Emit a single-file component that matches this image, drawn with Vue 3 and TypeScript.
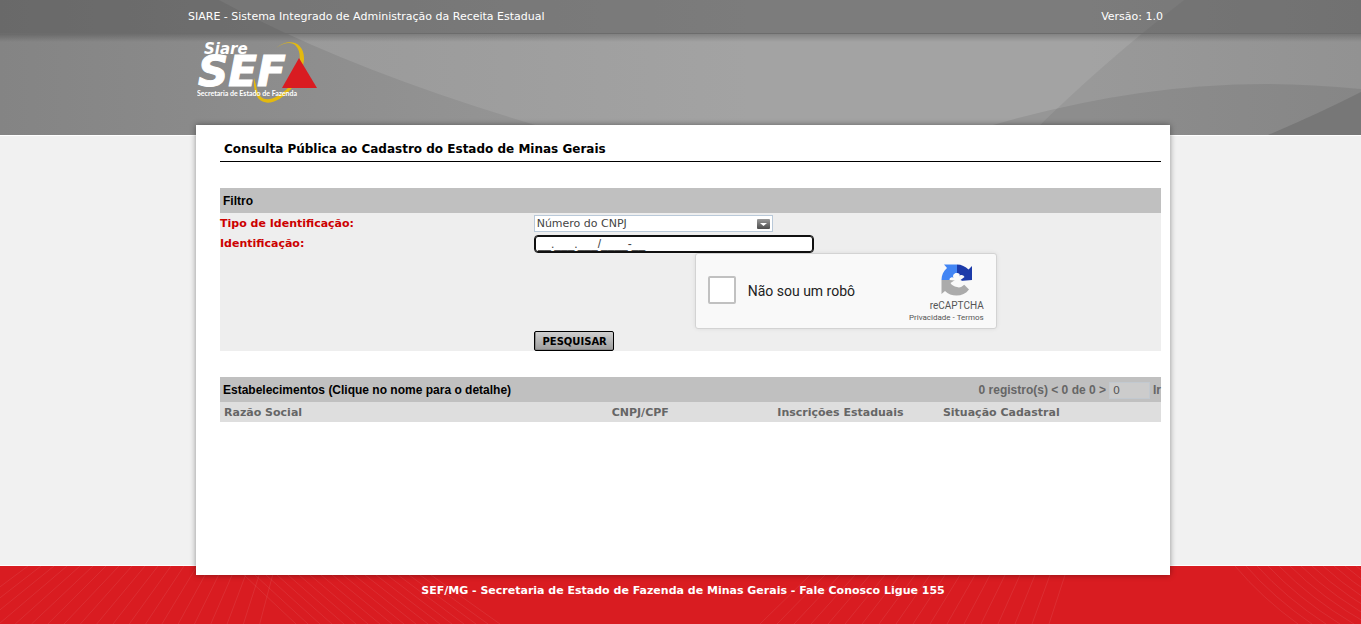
<script setup lang="ts">
import { ref } from 'vue'

const tipo = ref('cnpj')
const identificacao = ref('__.___.___/____-__')
const pagina = ref('0')
const robo = ref(false)

const tipos = [
  { value: 'cnpj', label: 'Número do CNPJ' },
  { value: 'cpf', label: 'Número do CPF' },
  { value: 'ie', label: 'Inscrição Estadual' },
]

const colunas = ['Razão Social', 'CNPJ/CPF', 'Inscrições Estaduais', 'Situação Cadastral']

const seq = (n: number): number[] => Array.from({ length: n }, (_, i) => i)
const leftRays = seq(20).map((i) => {
  const top = 28 + i * 13
  return `M${top} 0L${top - 78 + i * 3.3} 58`
})
const midRays = seq(18).map((i) => `M${244 + i * 11} 9L${296 + i * 12} 58`)
const rightRays = seq(18).map((i) => `M${760 + i * 17} 58L${810 + i * 15} 9`)
const edgeRays = seq(12).map((i) => `M${1235 + i * 11} 0Q${1262 + i * 12} 32 ${1298 + i * 14} 58`)
const rays = [...leftRays, ...midRays, ...rightRays, ...edgeRays].join('')
</script>

<template>
  <div class="page">
    <header class="header">
      <svg class="backdrop" viewBox="0 0 1361 135" preserveAspectRatio="none" aria-hidden="true">
        <defs>
          <linearGradient id="base" x1="0" x2="1" y1="0" y2="0">
            <stop offset="0" stop-color="#959595" />
            <stop offset="0.3" stop-color="#9c9c9c" />
            <stop offset="0.55" stop-color="#a3a3a3" />
            <stop offset="0.8" stop-color="#a3a3a3" />
            <stop offset="1" stop-color="#9c9c9c" />
          </linearGradient>
          <linearGradient id="left" x1="0" x2="1" y1="0" y2="0">
            <stop offset="0" stop-color="#848484" />
            <stop offset="1" stop-color="#969696" />
          </linearGradient>
          <linearGradient id="fade" x1="0" x2="0" y1="0" y2="1">
            <stop offset="0" stop-color="#000" stop-opacity="0.2" />
            <stop offset="1" stop-color="#000" stop-opacity="0" />
          </linearGradient>
        </defs>
        <rect width="1361" height="135" fill="url(#base)" />
        <path d="M0 0H219Q360 76 570 135H0Z" fill="url(#left)" />
        <path d="M1184 0H1361V135H1030Q1100 65 1184 0Z" fill="#000" fill-opacity="0.06" />
        <path d="M960 135Q1120 84 1265 84Q1310 84 1361 89V135Z" fill="#000" fill-opacity="0.08" />
        <path d="M1268 135Q1320 113 1361 92V135Z" fill="#777" />
        <rect width="1361" height="33" fill="#404040" fill-opacity="0.4" />
        <rect y="33" width="1361" height="1" fill="#6c6c6c" />
        <rect y="34" width="1361" height="8" fill="url(#fade)" />
      </svg>
      <div class="topbar">
        <div class="topbar-inner">
          <span>SIARE - Sistema Integrado de Administração da Receita Estadual</span>
          <span>Versão: 1.0</span>
        </div>
      </div>
      <div class="brand">
        <svg class="logo" width="122" height="66" viewBox="0 0 122 66" role="img" aria-label="Siare SEF">
          <path d="M79 10C92 -1 108 4 107 22C106 30 104 35 101 40L99 36C103 26 105 15 99 8C94 3 87 5 79 10Z" fill="#e3b90f" />
          <path d="M57 40C55 71 77 71 95 50L91 50C76 65 61 66 59 47Z" fill="#e3b90f" />
          <text x="7" y="16" class="logo-siare">Siare</text>
          <text x="1" y="48" class="logo-sef">SEF</text>
          <path d="M102 20L120 50H85Z" fill="#d91c21" />
          <text x="0" y="58" class="logo-tag">Secretaria de Estado de Fazenda</text>
        </svg>
      </div>
    </header>

    <div class="body">
      <main class="panel">
        <h1 class="title">Consulta Pública ao Cadastro do Estado de Minas Gerais</h1>

        <form class="filter" @submit.prevent>
          <h2 class="bar">Filtro</h2>
          <div class="row">
            <label for="tipo">Tipo de Identificação:</label>
            <div class="field">
              <div class="select">
                <select id="tipo" v-model="tipo">
                  <option v-for="t in tipos" :key="t.value" :value="t.value">{{ t.label }}</option>
                </select>
                <svg class="arrow" width="13" height="10" viewBox="0 0 13 10" aria-hidden="true">
                  <defs>
                    <linearGradient id="arrowFill" x1="0" x2="0" y1="0" y2="1">
                      <stop offset="0" stop-color="#999" />
                      <stop offset="1" stop-color="#4c4c4c" />
                    </linearGradient>
                  </defs>
                  <rect width="13" height="10" rx="1" fill="url(#arrowFill)" />
                  <path d="M3 4H10L6.5 7Z" fill="#fff" />
                </svg>
              </div>
            </div>
          </div>
          <div class="row">
            <label for="identificacao">Identificação:</label>
            <div class="field">
              <input id="identificacao" v-model="identificacao" class="ident" type="text" />
            </div>
          </div>
          <div class="captcha-row">
            <div class="captcha">
              <label class="check">
                <input v-model="robo" type="checkbox" />
                <span>Não sou um robô</span>
              </label>
              <div class="captcha-brand">
                <svg width="32" height="32" viewBox="0 0 64 64" aria-hidden="true">
                  <path d="M62 32V4L55 11C49 5 41 1 32 1V18L36 19C38 21 38 24 36 27L32 31L38 34Z" fill="#1c3aa9" />
                  <path d="M32 1H6L12 8C5 14 1 22 1 32H18C18 28 21 26 24 28L29 31L32 27Z" fill="#4285f4" />
                  <path d="M1 32V60L8 54C14 60 22 63 31 63C41 63 50 59 56 51L46 41C42 46 37 48 32 46C26 45 21 42 19 38L28 32Z" fill="#ababab" />
                  <path d="M17 32C17 27 21 26 25 28C22 22 27 17 32 18C35 20 36 22 35 26C38 20 45 21 47 26L39 32C43 33 46 37 48 41C42 45 36 43 33 38C30 39 28 37 28 33Z" fill="#f9f9f9" />
                </svg>
                <span class="captcha-name">reCAPTCHA</span>
                <span class="captcha-links"><a href="#">Privacidade</a> - <a href="#">Termos</a></span>
              </div>
            </div>
          </div>
          <div class="row">
            <span></span>
            <div class="field">
              <button type="submit" class="search">PESQUISAR</button>
            </div>
          </div>
        </form>

        <section>
          <div class="bar results-bar">
            <h2>Estabelecimentos (Clique no nome para o detalhe)</h2>
            <div class="pager">
              <span>0 registro(s) &lt; 0 de 0 &gt;</span>
              <input v-model="pagina" type="text" aria-label="Página" disabled />
              <span>Ir</span>
            </div>
          </div>
          <table class="results">
            <thead>
              <tr>
                <th v-for="c in colunas" :key="c" scope="col">{{ c }}</th>
              </tr>
            </thead>
          </table>
        </section>
      </main>
    </div>

    <footer class="footer">
      <svg class="backdrop" viewBox="0 0 1361 58" preserveAspectRatio="none" aria-hidden="true">
        <path :d="rays" fill="none" stroke="#fff" stroke-opacity="0.08" />
      </svg>
      <p>SEF/MG - Secretaria de Estado de Fazenda de Minas Gerais - Fale Conosco Ligue 155</p>
    </footer>
  </div>
</template>

<style>
body {
  margin: 0;
}
</style>

<style scoped>
.page {
  display: flex;
  flex-direction: column;
  min-height: 100vh;
  background: #f1f1f1;
  font-family: Verdana, "DejaVu Sans", sans-serif;
  font-size: 11px;
  line-height: 14px;
}
.page *,
.page {
  box-sizing: border-box;
}
h1,
h2,
p {
  margin: 0;
}
.header {
  position: relative;
  height: 135px;
  color: #fff;
}
.backdrop {
  position: absolute;
  top: 0;
  left: 0;
  width: 100%;
  height: 100%;
}
.topbar {
  position: relative;
  padding-right: 10px;
}
.topbar-inner {
  display: flex;
  justify-content: space-between;
  align-items: center;
  max-width: 975px;
  height: 33px;
  margin: 0 auto;
}
.brand {
  position: relative;
  max-width: 974px;
  margin: 0 auto;
  padding: 5px 0 0 3px;
}
.logo {
  display: block;
}
.logo text {
  fill: #fff;
}
.logo-siare {
  font: italic bold 15px "DejaVu Sans", sans-serif;
}
.logo-sef {
  font: italic bold 42px "DejaVu Sans", sans-serif;
  stroke: #fff;
  stroke-width: 1px;
}
.logo-tag {
  font: bold 7px Lato, sans-serif;
}
.body {
  display: flex;
  flex: 1;
  justify-content: center;
  padding-left: 5px;
  border-top: 1px solid #fff;
  border-bottom: 1px solid #fff;
}
.panel {
  position: relative;
  z-index: 1;
  width: 974px;
  margin: -11px 0 -10px;
  padding: 16px 9px 24px 24px;
  background: #fff;
  box-shadow: 0 0 6px rgba(0, 0, 0, 0.4);
}
.title {
  padding: 0 4px 3px;
  border-bottom: 1px solid #000;
  font-size: 12px;
  line-height: 17px;
}
.filter {
  margin: 26px 0;
  background: #eee;
}
.bar {
  height: 25px;
  padding: 1px 0 0 3px;
  background: #c0c0c0;
  font-family: "Liberation Sans", Arial, sans-serif;
  font-size: 12px;
  line-height: 24px;
}
.row {
  display: grid;
  grid-template-columns: 1fr 2fr;
  align-items: center;
  min-height: 20px;
}
.row label {
  padding-top: 2px;
  color: #c00;
  font-weight: bold;
}
.field {
  display: flex;
}
.select {
  position: relative;
  width: 239px;
  margin-top: 1px;
}
select {
  display: block;
  width: 100%;
  height: 17px;
  padding: 1px 2px 0;
  border: 1px solid #b9c9d9;
  border-radius: 0;
  background: #fff;
  color: #444;
  font: inherit;
  appearance: none;
}
.arrow {
  position: absolute;
  top: 4px;
  right: 3px;
  pointer-events: none;
}
.ident {
  width: 280px;
  height: 18px;
  margin-top: 2px;
  padding: 0 3px 1px;
  border: 1px solid #101010;
  border-radius: 4px;
  outline: 0;
  background: #fff;
  box-shadow: inset 0 0 0 1px #101010;
  color: #444;
  font-family: "Liberation Sans", Arial, sans-serif;
  font-size: 12px;
}
.captcha-row {
  display: flex;
  justify-content: center;
  height: 78px;
  padding-right: 3px;
  padding-left: 33.3%;
}
.captcha {
  display: flex;
  justify-content: space-between;
  width: 302px;
  height: 76px;
  border: 1px solid #d3d3d3;
  border-radius: 3px;
  background: #f9f9f9;
  box-shadow: 0 0 4px rgba(0, 0, 0, 0.08);
  font-family: Roboto, sans-serif;
}
.check {
  display: flex;
  align-items: center;
  gap: 12px;
  padding-left: 12px;
  color: #222;
  font-size: 14px;
}
.check input {
  width: 28px;
  height: 28px;
  margin: 0 0 2px;
  border: 2px solid #c1c1c1;
  border-radius: 2px;
  background: #fff;
  appearance: none;
}
.captcha-brand {
  display: flex;
  flex-direction: column;
  align-items: flex-end;
  padding: 10px 12px 0 0;
  color: #555;
}
.captcha-brand svg {
  margin-right: 11px;
}
.captcha-name {
  margin-top: 3px;
  font-size: 10px;
}
.captcha-links {
  font-size: 8px;
  line-height: 10px;
}
.captcha-links a {
  color: inherit;
  text-decoration: none;
}
.search {
  width: 80px;
  height: 20px;
  padding: 0 0 0 2px;
  border: 1px solid #000;
  border-radius: 2px;
  background: linear-gradient(#d0d0d0, #9c9c9c);
  box-shadow: inset 1px -1px 0 #888;
  color: #000;
  font: bold 10px "DejaVu Sans", sans-serif;
}
.results-bar {
  display: flex;
  justify-content: space-between;
}
.results-bar h2 {
  font: inherit;
  font-weight: bold;
}
.pager {
  display: flex;
  align-items: center;
  gap: 3px;
  color: #666;
  font-weight: bold;
  white-space: nowrap;
}
.pager input {
  width: 41px;
  height: 17px;
  padding: 0 3px;
  border: 1px solid #c2c9d0;
  background: #ccc;
  color: #555;
  font: 11px Verdana, "DejaVu Sans", sans-serif;
}
.results {
  width: 100%;
  border-collapse: collapse;
  table-layout: fixed;
  background: #dedede;
  color: #666;
}
.results th {
  width: 17.6%;
  height: 20px;
  padding: 2px 4px 0;
  text-align: left;
  white-space: nowrap;
}
.results th:first-child {
  width: 41.2%;
}
.results th:last-child {
  width: auto;
}
.footer {
  position: relative;
  min-height: 58px;
  padding: 18px 0 0 5px;
  background: #d91c21;
  color: #fff;
  font-weight: bold;
  text-align: center;
}
.footer p {
  position: relative;
}
</style>
